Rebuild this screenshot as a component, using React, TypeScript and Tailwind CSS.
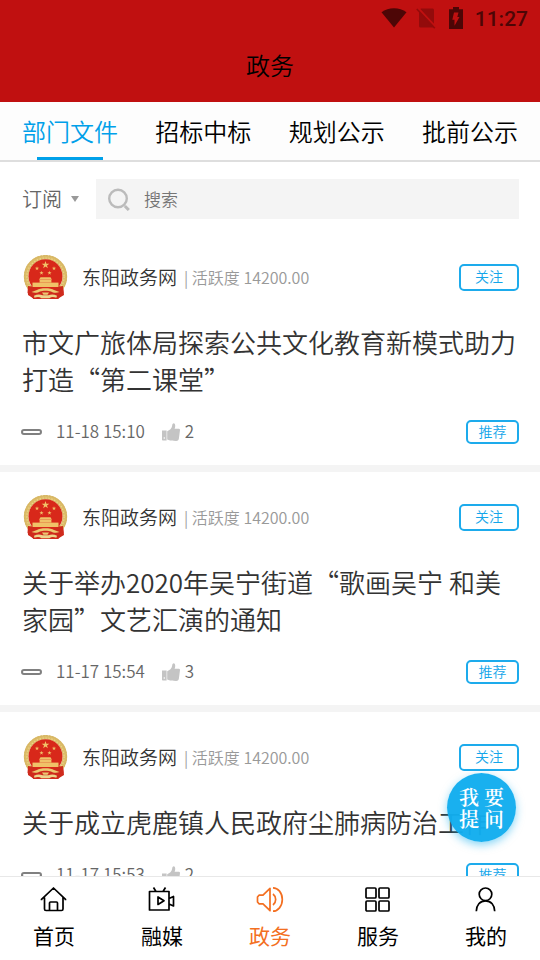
import React, { useState } from 'react';

type Article = {
  id: number;
  title: string;
  date: string;
  likes: number;
};

const tabs = ['部门文件', '招标中标', '规划公示', '批前公示'];

const articles: Article[] = [
  { id: 1, title: '市文广旅体局探索公共文化教育新模式助力打造“第二课堂”', date: '11-18 15:10', likes: 2 },
  { id: 2, title: '关于举办2020年吴宁街道“歌画吴宁 和美家园”文艺汇演的通知', date: '11-17 15:54', likes: 3 },
  { id: 3, title: '关于成立虎鹿镇人民政府尘肺病防治工作', date: '11-17 15:53', likes: 2 },
];

const STAR = 'M0-1 .23-.31 .95-.31 .37.12 .59.81 0 .38-.59.81-.37.12-.95-.31-.23-.31Z';

const Emblem = () => (
  <svg viewBox="0 0 48 48" className="size-12 shrink-0" aria-hidden="true">
    <path d="M6 33h35l1 9-5 3-1 1H12l-1-1-5-3z" fill="#cf2a1c" />
    <circle cx="23.5" cy="23.6" r="19.4" fill="none" stroke="#dcbc68" strokeWidth="4.6" />
    <circle cx="23.5" cy="23.6" r="21" fill="none" stroke="#d3b160" strokeWidth="1" strokeDasharray="1.6 1.4" />
    <circle cx="23.5" cy="23.6" r="18.6" fill="none" stroke="#ecd58c" strokeWidth="1.2" strokeDasharray="1.4 1.6" />
    <circle cx="23.5" cy="23.2" r="17" fill="#d8281a" />
    <g fill="#f0c268">
      <path d={STAR} transform="translate(23.5 12) scale(4)" />
      <path d={STAR} transform="translate(15 15.5) scale(2.2)" />
      <path d={STAR} transform="translate(32 15.5) scale(2.2)" />
      <path d={STAR} transform="translate(19.5 20) scale(2.2)" />
      <path d={STAR} transform="translate(27.5 20) scale(2.2)" />
      <path d="M18.500 24.200h10l1.400 2.600H17z" />
      <path d="M17.600 27h11.800v2.600H17.600z" />
      <path d="M10.500 29.600h26v4.400h-26z" />
    </g>
    <path d="M6 33c5 .5 8 2 10 3.500h15c2-1.500 5-3 10-3.500l.5 7-5.500 6H11.500L5.500 40z" fill="#cf2a1c" />
    <path d="M15 37c3-2.400 14-2.400 17 0l5.500 2c-3 1.200-6.500.8-8.500-.5-2.500-1-8.500-1-11 0-2 1.300-5.500 1.700-8.500.5z" fill="#ecc870" />
    <path d="M20 39.500h7l-1.500 2.300h-4z" fill="#ecc870" />
    <path d="M12 42.800c3-1.600 6-1.600 8.500-.5h6c2.500-1.100 5.500-1.100 8.500.5l-.6 2c-3-1-5-1-7 .4h-8c-2-1.400-4-1.400-7-.4z" fill="#ecd58c" />
  </svg>
);

const StatusBar = () => (
  <div className="flex h-9 items-center justify-end pr-3 text-[#4d0606]">
    <svg viewBox="0 0 26 22" className="h-[22px] w-[26px]" fill="currentColor" aria-hidden="true">
      <path d="M.5 5.200C7.500-.2 18.500-.2 25.500 5.200L13 20.500z" />
    </svg>
    <svg viewBox="0 0 20 22" className="ml-[9px] h-[22px] w-5" aria-hidden="true">
      <path d="M5 1.500h11.500a1.500 1.500 0 0 1 1.500 1.500v16a1.500 1.500 0 0 1-1.500 1.500H4.500A1.500 1.500 0 0 1 3 19V3.500z" fill="#930b0b" />
      <path d="M2 1 19.800 20" stroke="#c01010" strokeWidth="2" />
      <path d="M.8 2 18.800 21.200" stroke="#930b0b" strokeWidth="1.600" />
    </svg>
    <svg viewBox="0 0 14 22" className="ml-[13px] h-[22px] w-[14px]" aria-hidden="true">
      <path d="M4 0h6v2.200h4V22H0V2.200h4z" fill="currentColor" />
      <path d="M5 5.500h4.500L8.300 10H10.500L5.500 18.800V12.800H3.300z" fill="#c01010" />
    </svg>
    <span className="ml-3 pt-0.5 font-[Roboto,sans-serif] text-[21px] leading-none font-medium">11:27</span>
  </div>
);

const ThumbIcon = () => (
  <svg viewBox="0 0 18 18" className="size-[18px]" fill="#c4c4c4" aria-hidden="true">
    <path d="M0 7.600h4.600v10H.8a.8.800 0 0 1-.8-.8z" />
    <circle cx="2.300" cy="15" r=".8" fill="#fff" />
    <path d="M5.200 8.200c2.500-.8 4.500-2.500 4.900-5.100C10.200-.6 13-.6 13.200 2.500c.1 1.500-.2 2.500-.6 3.200h3.800c1.400 0 1.900 1 1.500 2L16.900 15.500c-.4 1.800-1.200 2.500-2.800 2.500-3.500 0-6-.2-8.900-1.400z" />
  </svg>
);

const navItems = [
  {
    label: '首页',
    icon: (
      <path d="M1.500 15.300v-1L13.500 3l12 11.300v1M4.500 12.500V24a1.500 1.500 0 0 0 1.500 1.500h15.500a1.500 1.500 0 0 0 1.500-1.500V12.500M9.500 25.500V18a1 1 0 0 1 1-1h6a1 1 0 0 1 1 1v7.500" />
    ),
  },
  {
    label: '融媒',
    icon: (
      <path d="M1.500 6.500h19.500v18.500h-19.500zM5.500 2.500l2.500 4M17.500 2.500l-2.500 4M10 12v7.500l6-3.700zM21 13.500l4.500-2v9.500l-4.500-2" />
    ),
  },
  {
    label: '政务',
    icon: (
      <path d="M7 10.200 14 3.300v22.400L7 18.800H3L1.500 17v-5L3 10.200zM17 9a7 7 0 0 1 0 11M17 2.800c5 0 9.300 5 9.300 11.700s-4.300 11.700-9.300 11.700" />
    ),
  },
  {
    label: '服务',
    icon: (
      <>
        <rect x="2" y="3" width="10" height="10" rx="1" />
        <rect x="15" y="3" width="10" height="10" rx="1" />
        <rect x="2" y="16" width="10" height="10" rx="1" />
        <rect x="15" y="16" width="10" height="10" rx="1" />
      </>
    ),
  },
  {
    label: '我的',
    icon: (
      <>
        <circle cx="13.5" cy="9.300" r="6.300" />
        <path d="M4.300 26.300c0-6 3.700-10.500 9.200-10.500s9.200 4.500 9.200 10.500" />
      </>
    ),
  },
];

const ArticleCard = ({ article }: { article: Article }) => (
  <article className="border-b-[7px] border-[#f4f4f4] pt-[21px] pr-[21px] pb-[21px] pl-[22px]">
    <div className="flex items-center">
      <Emblem />
      <span className="ml-3 text-[19px] text-[#333]">东阳政务网</span>
      <span className="ml-[7px] text-base text-[#999]">| 活跃度 14200.00</span>
      <button className="ml-auto h-[27px] w-[60px] rounded-[5px] border-2 border-[#1dabec] pb-0.5 text-sm leading-none text-[#14a6ea]">
        关注
      </button>
    </div>
    <h2 className="mt-[22px] text-[26px] leading-[37px] text-[#333]">{article.title}</h2>
    <div className="mt-[23px] flex h-6 items-center text-[17px] text-[#666]">
      <span className="-ml-px h-[6px] w-[21px] rounded-[3px] border-2 border-[#808080]" />
      <time className="ml-[14px] pb-0.5">{article.date}</time>
      <button className="ml-[17px] flex items-center gap-[5px]" aria-label="点赞">
        <ThumbIcon />
        <span className="pb-0.5">{article.likes}</span>
      </button>
      <button className="ml-auto h-6 w-[53px] rounded-[5px] border-2 border-[#1dabec] pb-0.5 text-sm leading-none text-[#14a6ea]">
        推荐
      </button>
    </div>
  </article>
);

export default function App() {
  const [activeTab, setActiveTab] = useState(0);
  const [activeNav, setActiveNav] = useState(2);

  return (
    <div
      lang="zh-CN"
      className="relative flex h-screen flex-col overflow-hidden bg-white font-['Noto_Sans_CJK_SC',sans-serif] font-[350]"
    >
      <header className="shrink-0 bg-[#c01010] pb-[19px]">
        <StatusBar />
        <h1 className="mt-[11px] text-center text-2xl leading-9 text-black">政务</h1>
      </header>

      <nav className="flex shrink-0 justify-between border-b-2 border-[#dedede] bg-[#fdfdfd] px-[22px]">
        {tabs.map((tab, i) => (
          <button
            key={tab}
            onClick={() => setActiveTab(i)}
            className={`flex flex-col items-center pt-[11px] text-2xl leading-9 ${
              i === activeTab ? 'text-[#00a0e9]' : 'text-black'
            }`}
          >
            {tab}
            <span className={`mt-2 h-[3px] w-[66px] ${i === activeTab ? 'bg-[#00a0e9]' : 'bg-transparent'}`} />
          </button>
        ))}
      </nav>

      <div className="flex shrink-0 items-center pt-[17px] pr-[21px] pb-[13px] pl-[22px]">
        <button className="flex w-[74px] items-center gap-[9px] text-xl text-[#666]">
          订阅
          <svg viewBox="0 0 8 6" className="h-[6px] w-2" fill="#999" aria-hidden="true">
            <path d="M0 0h8L4 6z" />
          </svg>
        </button>
        <label className="flex h-10 flex-1 items-center gap-[13px] bg-[#f4f4f4] pl-3">
          <svg viewBox="0 0 23 23" className="size-[23px]" fill="none" stroke="#bbb" strokeWidth="2.400" aria-hidden="true">
            <circle cx="10" cy="10.5" r="8.800" />
            <path d="m16.800 18 4 4" strokeWidth="3" />
          </svg>
          <input
            type="text"
            placeholder="搜索"
            aria-label="搜索"
            className="min-w-0 flex-1 bg-transparent text-[17px] outline-none placeholder:text-[#757575]"
          />
        </label>
      </div>

      <main className="min-h-0 flex-1 overflow-hidden">
        {articles.map(article => (
          <ArticleCard key={article.id} article={article} />
        ))}
      </main>

      <button className="absolute right-6 bottom-[118px] flex size-[69px] items-center justify-center rounded-full bg-[#12adee]/97 font-['Noto_Serif_CJK_SC','Noto_Sans_CJK_SC',serif] text-xl leading-[22px] font-semibold text-white shadow-[0_3px_8px_rgba(18,173,238,0.5)]">
        <span>
          我 要
          <br />提 问
        </span>
      </button>

      <nav className="grid h-[84px] shrink-0 grid-cols-5 border-t border-[#e8e8e8] bg-white">
        {navItems.map((item, i) => (
          <button
            key={item.label}
            onClick={() => setActiveNav(i)}
            className={`flex flex-col items-center pt-2 text-[21px] font-normal ${
              i === activeNav ? 'text-[#f36f21]' : 'text-black'
            }`}
          >
            <svg
              viewBox="0 0 28 28"
              className="size-7"
              fill="none"
              stroke="currentColor"
              strokeWidth="1.700"
              strokeLinejoin="round"
              aria-hidden="true"
            >
              {item.icon}
            </svg>
            <span className="mt-[6px] leading-8">{item.label}</span>
          </button>
        ))}
      </nav>
    </div>
  );
}
